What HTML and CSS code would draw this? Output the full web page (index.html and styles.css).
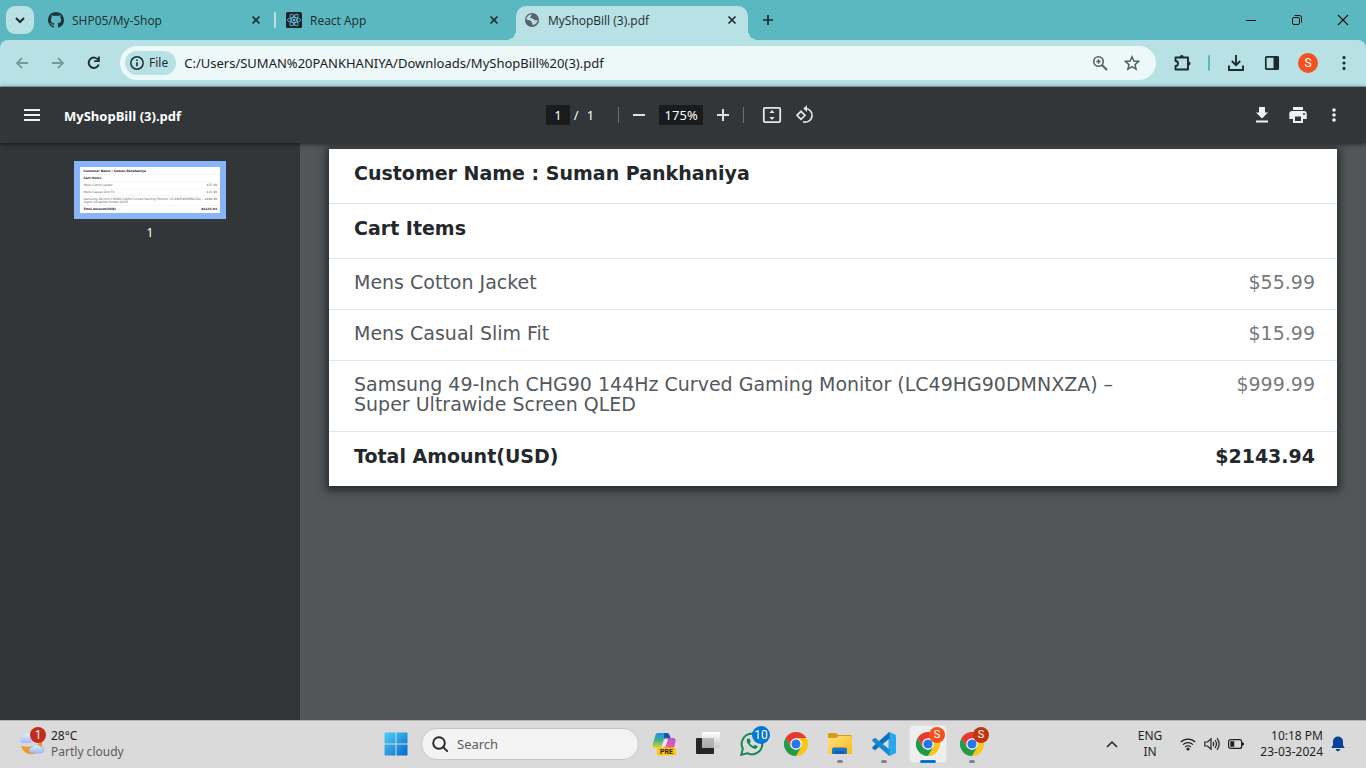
FILE: index.html
```html
<!DOCTYPE html>
<html lang="en">
<head>
<meta charset="utf-8">
<title>MyShopBill (3).pdf</title>
<link rel="stylesheet" href="styles.css">
</head>
<body>
<svg class="defs" aria-hidden="true">
  <defs>
    <linearGradient id="win" x1="0" y1="0" x2="1" y2="1"><stop offset="0" stop-color="#4fd0fb"/><stop offset="1" stop-color="#0467c8"/></linearGradient>
    <linearGradient id="folder" x1="0" y1="0" x2="1" y2="1"><stop offset="0" stop-color="#ffe083"/><stop offset="1" stop-color="#f9bb14"/></linearGradient>
    <linearGradient id="copA" x1="0" y1="0" x2="0" y2="1"><stop offset="0" stop-color="#1d8fe8"/><stop offset=".5" stop-color="#3db58c"/><stop offset="1" stop-color="#f3cf28"/></linearGradient>
    <linearGradient id="copB" x1="1" y1="0" x2="0" y2="1"><stop offset="0" stop-color="#a557ea"/><stop offset=".6" stop-color="#ee5c9c"/><stop offset="1" stop-color="#fb9050"/></linearGradient>
    <linearGradient id="cloud" x1="0" y1="0" x2="0" y2="1"><stop offset="0" stop-color="#e6f0ff"/><stop offset="1" stop-color="#9dbcf0"/></linearGradient>
    <linearGradient id="pane" x1="0" y1="0" x2="0" y2="1"><stop offset="0" stop-color="#fff"/><stop offset="1" stop-color="#c8c8c8"/></linearGradient>
    <symbol id="close" viewBox="0 0 16 16"><path d="M4.500 4.500l7 7M11.500 4.500l-7 7" fill="none" stroke="#1d2b2d" stroke-width="1.700"/></symbol>
    <symbol id="chrome" viewBox="0 0 24 24">
      <path d="M12 6H22.400A12 12 0 0 1 12 24L17.200 15z" fill="#fcc619"/>
      <path d="M1.600 6A12 12 0 0 1 22.400 6H12L6.800 15z" fill="#e53a2d"/>
      <path d="M1.600 6L6.800 15L12 18L17.200 15L12 24A12 12 0 0 1 1.600 6z" fill="#249a48"/>
      <circle cx="12" cy="12" r="5.800" fill="#fff"/><circle cx="12" cy="12" r="4.600" fill="#2477ea"/>
    </symbol>
  </defs>
</svg>

<header class="tabstrip">
  <button class="tab-search" aria-label="Search tabs"><svg width="16" height="16" viewBox="0 0 16 16"><path d="M4 6l4 4 4-4" fill="none" stroke="#1d2b2d" stroke-width="2"/></svg></button>
  <nav class="tabs">
    <div class="tab">
      <svg width="16" height="16" viewBox="0 0 16 16"><path fill="#24323a" d="M8 0C3.58 0 0 3.58 0 8c0 3.54 2.29 6.53 5.47 7.59.4.07.55-.17.55-.38 0-.19-.01-.82-.01-1.49-2.01.37-2.53-.49-2.69-.94-.09-.23-.48-.94-.82-1.13-.28-.15-.68-.52-.01-.53.63-.01 1.08.58 1.23.82.72 1.21 1.87.87 2.33.66.07-.52.28-.87.51-1.07-1.78-.2-3.64-.89-3.64-3.95 0-.87.31-1.59.82-2.15-.08-.2-.36-1.02.08-2.12 0 0 .67-.21 2.2.82.64-.18 1.32-.27 2-.27s1.36.09 2 .27c1.53-1.04 2.2-.82 2.2-.82.44 1.1.16 1.92.08 2.12.51.56.82 1.27.82 2.15 0 3.07-1.87 3.75-3.65 3.95.29.25.54.73.54 1.48 0 1.07-.01 1.93-.01 2.2 0 .21.15.46.55.38A8.01 8.01 0 0 0 16 8c0-4.42-3.58-8-8-8z"/></svg>
      <span class="tab-title">SHP05/My-Shop</span>
      <button class="tab-close" aria-label="Close SHP05/My-Shop"><svg width="16" height="16"><use href="#close"/></svg></button>
    </div>
    <span class="tab-sep"></span>
    <div class="tab">
      <svg width="16" height="16" viewBox="0 0 16 16"><rect width="16" height="16" rx="1.500" fill="#20232a"/><g fill="none" stroke="#61bfdc" stroke-width=".9"><ellipse cx="8" cy="8" rx="6.500" ry="2.500"/><ellipse cx="8" cy="8" rx="6.500" ry="2.500" transform="rotate(60 8 8)"/><ellipse cx="8" cy="8" rx="6.500" ry="2.500" transform="rotate(120 8 8)"/></g><circle cx="8" cy="8" r="1.300" fill="#61bfdc"/></svg>
      <span class="tab-title">React App</span>
      <button class="tab-close" aria-label="Close React App"><svg width="16" height="16"><use href="#close"/></svg></button>
    </div>
    <div class="tab tab-active">
      <svg width="16" height="16" viewBox="0 0 16 16"><circle cx="8" cy="8" r="7" fill="#5a6368"/><path d="M8 2.300c-.8.600-.4 1.500-1.400 2.100-.8.500-.5 1.500.6 1.700 1 .1 1 .9 2 1 1.200.200 1.200 1.500 2.400 1.300.9-.1 1.300-.7 2.100-.4-.3 2.800-2.400 4.800-5.100 5.200.2-1.100-.2-1.800-.9-2.200.2-1.600-.6-2.300-1.800-2.600C4.700 8.200 3.600 7.500 2.400 7.200 2.700 4.500 5 2.400 8 2.300z" fill="#b7e1e4"/></svg>
      <span class="tab-title">MyShopBill (3).pdf</span>
      <button class="tab-close" aria-label="Close MyShopBill (3).pdf"><svg width="16" height="16"><use href="#close"/></svg></button>
    </div>
  </nav>
  <button class="new-tab" aria-label="New tab"><svg width="16" height="16" viewBox="0 0 16 16"><path d="M8 3v10M3 8h10" stroke="#1d2b2d" stroke-width="1.700"/></svg></button>
  <div class="window-controls">
    <button aria-label="Minimize"><svg width="12" height="12" viewBox="0 0 12 12"><path d="M1 6.500h10" stroke="#111"/></svg></button>
    <button aria-label="Restore"><svg width="12" height="12" viewBox="0 0 12 12" fill="none" stroke="#111"><rect x="1.500" y="3.500" width="7" height="7" rx="1.500"/><path d="M3.500 1.500H8.500a2 2 0 0 1 2 2V8.500"/></svg></button>
    <button aria-label="Close window"><svg width="12" height="12" viewBox="0 0 12 12"><path d="M1 1l10 10M11 1L1 11" stroke="#111" stroke-width="1.100"/></svg></button>
  </div>
</header>

<div class="toolbar">
  <button class="tool" aria-label="Back"><svg width="16" height="16" viewBox="0 0 16 16"><path d="M14 8H3M8 3L3 8l5 5" fill="none" stroke="#7b9a9d" stroke-width="1.800"/></svg></button>
  <button class="tool" aria-label="Forward"><svg width="16" height="16" viewBox="0 0 16 16"><path d="M2 8h11M8 3l5 5-5 5" fill="none" stroke="#7b9a9d" stroke-width="1.800"/></svg></button>
  <button class="tool" aria-label="Reload"><svg width="16" height="16" viewBox="0 0 16 16"><path d="M12.800 9.500A5.200 5.200 0 1 1 12.300 5" fill="none" stroke="#1d2b2d" stroke-width="1.900"/><path d="M13.800 1.500V7H8.300V5.200h3.700V1.500z" fill="#1d2b2d"/></svg></button>
  <div class="omnibox">
    <button class="chip"><svg width="16" height="16" viewBox="0 0 16 16"><circle cx="8" cy="8" r="6.200" fill="none" stroke="#1d2b2d" stroke-width="1.500"/><path d="M8 7.200v4M8 4.500v1.600" stroke="#1d2b2d" stroke-width="1.600"/></svg>File</button>
    <input class="url" aria-label="Address" value="C:/Users/SUMAN%20PANKHANIYA/Downloads/MyShopBill%20(3).pdf">
    <button class="inner" aria-label="Zoom"><svg width="16" height="16" viewBox="0 0 16 16" fill="none" stroke="#526164"><circle cx="6.500" cy="6.500" r="4.700" stroke-width="1.600"/><path d="M10 10l5 5" stroke-width="2"/><path d="M6.500 4.300v4.400M4.300 6.500h4.400" stroke-width="1.500"/></svg></button>
    <button class="inner" aria-label="Bookmark this tab"><svg width="16" height="16" viewBox="0 0 16 16"><path d="M8 1.800l1.900 4.300 4.700.4-3.600 3.100 1.100 4.600L8 11.700l-4.100 2.500L5 9.600 1.400 6.500l4.700-.4z" fill="none" stroke="#526164" stroke-width="1.500"/></svg></button>
  </div>
  <button class="tool" aria-label="Extensions"><svg width="18" height="18" viewBox="0 0 18 18"><path d="M2.500 3.500H15V15.500H2.500V12a2.300 2.300 0 0 0 0-5z" fill="none" stroke="#1d2b2d" stroke-width="1.900" stroke-linejoin="round"/><path d="M6.700 3a2 2 0 0 1 4 0zM15.500 7.500a2 2 0 0 1 0 4z" fill="#1d2b2d"/></svg></button>
  <span class="tool-sep"></span>
  <button class="tool" aria-label="Downloads"><svg width="18" height="18" viewBox="0 0 18 18"><path d="M9 1v10M4.800 7L9 11.200 13.200 7M2 11.500V16h14v-4.500" fill="none" stroke="#1d2b2d" stroke-width="1.900"/></svg></button>
  <button class="tool" aria-label="Side panel"><svg width="16" height="16" viewBox="0 0 16 16"><rect x="1.800" y="1.800" width="12.400" height="12.400" rx="1" fill="none" stroke="#1d2b2d" stroke-width="1.700"/><path d="M9.500 1.500h5v13h-5z" fill="#1d2b2d"/></svg></button>
  <button class="tool" aria-label="Profile"><span class="avatar">S</span></button>
  <button class="tool" aria-label="Menu"><svg width="16" height="16" viewBox="0 0 16 16" fill="#1d2b2d"><circle cx="8" cy="2.600" r="1.600"/><circle cx="8" cy="8" r="1.600"/><circle cx="8" cy="13.400" r="1.600"/></svg></button>
</div>

<section class="pdfbar">
  <div class="pdf-left">
    <button aria-label="Menu"><svg width="16" height="16" viewBox="0 0 16 16"><path d="M0 3h16M0 8h16M0 13h16" stroke="#f1f1f1" stroke-width="2"/></svg></button>
    <h1 class="pdf-title">MyShopBill (3).pdf</h1>
  </div>
  <div class="pdf-center">
    <input class="box page-no" aria-label="Page number" value="1"><span class="slash">/</span><span class="page-count">1</span>
    <span class="pdf-sep"></span>
    <button aria-label="Zoom out"><svg width="14" height="14" viewBox="0 0 14 14"><path d="M1 7h12" stroke="#e0e0e0" stroke-width="2"/></svg></button>
    <input class="box zoom" aria-label="Zoom level" value="175%">
    <button aria-label="Zoom in"><svg width="14" height="14" viewBox="0 0 14 14"><path d="M1 7h12M7 1v12" stroke="#e0e0e0" stroke-width="2"/></svg></button>
    <span class="pdf-sep"></span>
    <button class="wide" aria-label="Fit to page"><svg width="20" height="20" viewBox="0 0 20 20"><rect x="1.800" y="2.800" width="16.400" height="14.400" rx="1.200" fill="none" stroke="#e8e8e8" stroke-width="1.800"/><path d="M10 5l2.600 3H7.400zM10 15l2.600-3H7.400z" fill="#e8e8e8"/></svg></button>
    <button class="last" aria-label="Rotate counterclockwise"><svg width="20" height="20" viewBox="0 0 20 20" fill="none" stroke="#e8e8e8" stroke-width="1.700"><path d="M6 6.300l4 4-4 4-4-4z"/><path d="M10 3.500A6.800 6.800 0 1 1 8 16.700"/><path d="M12 .3L8.300 3.600 12 7z" fill="#e8e8e8" stroke="none"/></svg></button>
  </div>
  <div class="pdf-right">
    <button aria-label="Download"><svg width="16" height="16" viewBox="0 0 16 16" fill="#f1f1f1"><path d="M5 0h6v5.500h3L8 11.500 2 5.500h3zM2 13.500h12v2H2z"/></svg></button>
    <button aria-label="Print"><svg width="18" height="18" viewBox="0 0 18 18" fill="#f1f1f1"><path d="M4 1h10v3H4zM3 5h12a2.700 2.700 0 0 1 2.700 2.700V13H14v4H4v-4H.3V7.700A2.700 2.700 0 0 1 3 5zm3 5.500V15h6v-4.500z"/><circle cx="15" cy="8" r="1" fill="#323639"/></svg></button>
    <button aria-label="More actions"><svg width="16" height="16" viewBox="0 0 16 16" fill="#f1f1f1"><circle cx="8" cy="3" r="1.800"/><circle cx="8" cy="8" r="1.800"/><circle cx="8" cy="13" r="1.800"/></svg></button>
  </div>
</section>

<main class="viewer">
  <aside class="sidebar">
    <button class="thumb" aria-label="Thumbnail for page 1">
      <svg class="thumb-page" viewBox="0 0 140 46" aria-hidden="true">
        <path d="M0 7.500h140M0 15h140M0 22h140M0 29h140M0 38.500h140" stroke="#e4e7ea" stroke-width=".4"/>
        <g class="mini"><text class="mini-b" x="3.500" y="4.500">Customer Name : Suman Pankhaniya</text><text class="mini-b" x="3.500" y="12">Cart Items</text><text x="3.500" y="19">Mens Cotton Jacket</text><text x="3.500" y="26">Mens Casual Slim Fit</text><text x="3.500" y="33">Samsung 49-Inch CHG90 144Hz Curved Gaming Monitor (LC49HG90DMNXZA) –</text><text x="3.500" y="36">Super Ultrawide Screen QLED</text><text class="mini-b" x="3.500" y="43">Total Amount(USD)</text></g>
        <g class="mini" text-anchor="end"><text x="137" y="19">$55.99</text><text x="137" y="26">$15.99</text><text x="137" y="33">$999.99</text><text class="mini-b" x="137" y="43">$2143.94</text></g>
      </svg>
    </button>
    <span class="thumb-no">1</span>
  </aside>
  <div class="canvas">
    <table class="bill">
      <tbody>
        <tr class="strong"><th colspan="2" scope="row">Customer Name : Suman Pankhaniya</th></tr>
        <tr class="strong"><th colspan="2" scope="row">Cart Items</th></tr>
        <tr><td>Mens Cotton Jacket</td><td class="price">$55.99</td></tr>
        <tr><td>Mens Casual Slim Fit</td><td class="price">$15.99</td></tr>
        <tr><td>Samsung 49-Inch CHG90 144Hz Curved Gaming Monitor (LC49HG90DMNXZA) –<br>Super Ultrawide Screen QLED</td><td class="price">$999.99</td></tr>
        <tr class="strong"><th scope="row">Total Amount(USD)</th><td class="price">$2143.94</td></tr>
      </tbody>
    </table>
  </div>
</main>

<footer class="taskbar">
  <button class="weather">
    <span class="weather-icon"><svg width="26" height="26" viewBox="0 0 26 26"><path d="M2 15c3 9 12 10 17 6 4-3 5-7 3.500-12C20 14 12 17 2 15z" fill="#f39a1d"/><path d="M3.500 12a3.300 3.300 0 0 1 0-6.500 5 5 0 0 1 9-1V12z" fill="url(#cloud)"/><path d="M13 22a3 3 0 0 1 0-6 4.500 4.500 0 0 1 8-.500 3.200 3.200 0 0 1 1 6.500z" fill="url(#cloud)" stroke="#85a9e4" stroke-width=".5"/></svg><span class="badge badge-red">1</span></span>
    <span class="weather-text"><span>28°C</span><span class="muted">Partly cloudy</span></span>
  </button>
  <nav class="apps">
    <button class="app" aria-label="Start"><svg width="24" height="24" viewBox="0 0 24 24"><path fill="url(#win)" d="M1 .5h10.500v11H.5V1zM12.500.500H23l.5.500v10.500h-11zM.5 12.500h11v11H1l-.5-.5zM12.500 12.500h11V23l-.5.500H12.500z"/></svg></button>
    <label class="search"><svg width="18" height="18" viewBox="0 0 18 18" fill="none" stroke="#262626" stroke-width="1.900"><circle cx="8" cy="8" r="5.800"/><path d="M12.200 12.200l4 4" stroke-linecap="round"/></svg><input type="text" placeholder="Search" aria-label="Search"></label>
    <button class="app" aria-label="Copilot"><svg width="24" height="24" viewBox="0 0 24 24"><path d="M6 1h8.500c2 0 2.500 1 3 2.500L18.500 6h-4c-2 0-2.700 1-3.300 3L9 16H3.500C.8 16 .3 14 1 11.500L3.300 3.500C3.800 1.800 4.500 1 6 1z" fill="url(#copA)"/><path d="M12 1h2.500c2 0 2.500 1 3 2.500L18.500 6h-4c-1 0-1.700.3-2.300 1z" fill="#1b50c0"/><path d="M15.500 6H21c2.500 0 3 2 2.400 4L21.500 17H9c2 0 2.500-1 3-2.600l2-6.400c.4-1.200.5-2 1.500-2z" fill="url(#copB)"/><path d="M13.500 7.500h2.500l-2.500 7H10z" fill="#e9eef6"/><rect x="5" y="15.500" width="19" height="8" rx="2" fill="#ffc60a"/><text class="pre" x="14.500" y="22">PRE</text></svg></button>
    <button class="app" aria-label="Task view"><svg width="24" height="24" viewBox="0 0 24 24"><rect x="0" y="6" width="18" height="16" rx="1" fill="#262626"/><rect x="6" y="0" width="18" height="16" rx="1" fill="url(#pane)"/><path d="M6 6h12v10H6z" fill="#949494" opacity=".55"/></svg></button>
    <button class="app" aria-label="WhatsApp"><svg width="24" height="24" viewBox="0 0 24 24"><path d="M1.300 22.700l1.500-6A10.300 10.300 0 1 1 7.300 21.200z" fill="#d5ded9" stroke="#178556" stroke-width="2"/><path d="M8 6.500c-2 1-1.500 3.500.5 6s5 4.500 7 4.200c1.700-.3 2.300-1.500 2-2.500l-2.700-1.400-1.300 1.500c-2-.8-3.200-2-3.900-3.500L10.800 9.500 9.500 6.500z" fill="#178556"/></svg><span class="badge badge-blue">10</span></button>
    <button class="app" aria-label="Chrome"><svg width="24" height="24"><use href="#chrome"/></svg></button>
    <button class="app running" aria-label="File Explorer"><svg width="24" height="24" viewBox="0 0 24 24"><path d="M0 2.500Q0 1 1.500 1H8l2 2h13l1 1v5H0z" fill="#d99b10"/><path d="M0 6h8l2.500-2H22.500Q24 4 24 5.500V22H0z" fill="url(#folder)"/><path d="M4 22v-4.500Q4 15.500 6 15.500H17q2 0 2 2V22z" fill="#1774c8"/><path d="M7 19h9v3H7z" fill="#1160ae"/></svg></button>
    <button class="app running" aria-label="Visual Studio Code"><svg width="24" height="24" viewBox="0 0 24 24"><path d="M17.500 0L24 3v18l-6.500 3-1-1V1z" fill="#29a8f0"/><path d="M17.500 0v6.500L3 18.300.3 16.500V15L17 .3z" fill="#0b72bd"/><path d="M17.500 24v-6.500L3 5.700.3 7.500V9L17 23.700z" fill="#1689d3"/></svg></button>
    <button class="app current" aria-label="Chrome, current window"><svg width="24" height="24"><use href="#chrome"/></svg><span class="badge badge-s">S</span></button>
    <button class="app running" aria-label="Chrome, second profile"><svg width="24" height="24"><use href="#chrome"/></svg><span class="badge badge-s dark">S</span></button>
  </nav>
  <div class="tray">
    <button aria-label="Show hidden icons"><svg width="12" height="12" viewBox="0 0 12 12"><path d="M1 9l5-5 5 5" fill="none" stroke="#222" stroke-width="1.500"/></svg></button>
    <button class="lang"><span>ENG</span><span>IN</span></button>
    <button class="status" aria-label="Network, sound and battery">
      <svg width="16" height="16" viewBox="0 0 16 16" fill="none" stroke="#222" stroke-width="1.200"><path d="M.7 6.200a10.300 10.300 0 0 1 14.600 0M3 8.700a7 7 0 0 1 10 0M5.200 11a4 4 0 0 1 5.600 0"/><circle cx="8" cy="13" r="1" fill="#222"/></svg>
      <svg width="16" height="16" viewBox="0 0 16 16" fill="none" stroke="#222" stroke-width="1.200"><path d="M.8 6h2.700L7 2.800v10.400L3.500 10H.8zM9 5.800q1.500 2.200 0 4.400M11 4q3 4 0 8M13 2.200q4.300 5.800 0 11.600"/></svg>
      <svg width="16" height="16" viewBox="0 0 16 16"><rect x=".6" y="3.600" width="13" height="8.800" rx="2" fill="none" stroke="#222" stroke-width="1.200"/><path d="M2.300 5.300h4v5.400h-4zM14 6.300l2 .7v2l-2 .7z" fill="#222"/></svg>
    </button>
    <button class="clock"><span>10:18 PM</span><span>23-03-2024</span></button>
    <button aria-label="Notifications"><svg width="14" height="16" viewBox="0 0 14 16" fill="#07419b"><path d="M7 .5a5 5 0 0 1 5 5V9l1.700 3H.3L2 9V5.500a5 5 0 0 1 5-5zM4.800 13h4.400a2.200 2.200 0 0 1-4.400 0z"/></svg></button>
  </div>
</footer>
</body>
</html>
```

FILE: styles.css
```css
* { box-sizing: border-box; }

body {
  margin: 0;
  height: 100vh;
  display: flex;
  flex-direction: column;
  overflow: hidden;
  font-family: "Noto Sans", "Open Sans", sans-serif;
  font-size: 12px;
  line-height: 16px;
  color: #1d2b2d;
  background: #5bb8c1;
}

button {
  display: flex;
  align-items: center;
  justify-content: center;
  padding: 0;
  border: 0;
  background: none;
  font: inherit;
  color: inherit;
}

input { font: inherit; color: inherit; border: 0; padding: 0; min-width: 0; }
svg { display: block; flex: none; }
.defs { position: absolute; width: 0; height: 0; }

/* Tab strip */
.tabstrip { display: flex; height: 40px; padding-left: 6px; flex: none; }
.tab-search { width: 28px; height: 28px; margin: 6px 6px 0 0; border-radius: 9px; background: #b7e1e4; }
.tabs { display: flex; min-width: 0; }
.tab { position: relative; display: flex; align-items: center; width: 232px; margin: 6px 6px 0 0; padding: 0 8px 6px; gap: 8px; }
.tab-title { flex: 1; white-space: nowrap; line-height: 18px; padding-top: 2px; font-family: "Open Sans", sans-serif; }
.tab-sep { width: 2px; height: 16px; margin: 12px 2px 0 -4px; background: #b7e1e4; border-radius: 1px; }
.tab-active { background: #b7e1e4; border-radius: 10px 10px 0 0; }
.tab-active::before, .tab-active::after { content: ""; position: absolute; bottom: 0; width: 10px; height: 10px; }
.tab-active::before { right: 100%; background: radial-gradient(circle at 0 0, #5bb8c1 10px, #b7e1e4 10px); }
.tab-active::after { left: 100%; background: radial-gradient(circle at 100% 0, #5bb8c1 10px, #b7e1e4 10px); }
.new-tab { width: 28px; height: 40px; }
.window-controls { display: flex; margin-left: auto; }
.window-controls button { width: 46px; height: 40px; }

/* Address bar */
.toolbar { display: flex; align-items: center; gap: 8px; height: 47px; padding: 0 8px; flex: none; background: #b7e1e4; border-bottom: 1px solid #8fb3b6; border-radius: 8px 8px 0 0; }
.tool { width: 28px; height: 28px; flex: none; }
.omnibox { flex: 1; display: flex; align-items: center; height: 34px; margin: 0 4px; padding: 0 8px 0 5px; border-radius: 17px; background: #edf8f9; }
.chip { height: 24px; padding: 0 8px 0 4px; gap: 4px; border-radius: 12px; background: #b7e1e4; }
.url { flex: 1; margin-left: 8px; background: none; font-size: 13px; color: #1c2224; }
.inner { width: 32px; height: 32px; }
.tool-sep { width: 2px; height: 16px; margin: 0 4px; background: #5bb8c1; border-radius: 1px; }
.avatar { width: 20px; height: 20px; border-radius: 50%; background: #f4511e; color: #fff; line-height: 20px; text-align: center; font-family: Roboto, sans-serif; }

/* PDF toolbar */
.pdfbar { position: relative; display: grid; grid-template-columns: 1fr auto 1fr; align-items: center; height: 56px; flex: none; padding: 0 20px; background: #323639; color: #fff; box-shadow: 0 1px 5px rgba(0, 0, 0, .6); font-size: 13px; }
.pdf-left, .pdf-center, .pdf-right { display: flex; align-items: center; }
.pdf-left button { width: 24px; height: 24px; }
.pdf-title { margin: 0 0 0 20px; padding-top: 2px; font-family: "Open Sans", sans-serif; font-size: 13px; font-weight: 700; line-height: 20px; }
.pdf-center button { width: 40px; height: 32px; }
.pdf-center .wide { width: 36px; margin-left: 10px; }
.pdf-center .last { width: 30px; }
.box { height: 20px; background: #191b1c; text-align: center; }
.page-no { width: 24px; }
.slash { margin-left: 4px; }
.page-count { margin: 0 24px 0 8px; }
.zoom { width: 44px; }
.pdf-sep { width: 1px; height: 16px; background: #6b6e70; }
.pdf-right { justify-content: flex-end; gap: 12px; }
.pdf-right button { width: 24px; height: 24px; }

/* Viewer */
.viewer { display: flex; flex: 1; min-height: 0; background: #525659; }
.sidebar { width: 300px; flex: none; padding-top: 18px; background: #323639; display: flex; flex-direction: column; align-items: center; color: #fff; }
.thumb { width: 152px; padding: 6px; background: #8ab4f8; }
.thumb-page { width: 100%; background: #fff; }
.mini { font-family: "DejaVu Sans", sans-serif; font-size: 3px; fill: #666; }
.mini-b { font-weight: bold; fill: #222; }
.thumb-no { margin-top: 6px; }
.canvas { flex: 1; padding: 6px 29px; }
.bill { width: 100%; border-collapse: collapse; background: #fff; box-shadow: 0 2px 8px 3px rgba(0, 0, 0, .5); font-family: "DejaVu Sans", sans-serif; font-size: 19px; line-height: 20px; color: #54585c; }
.bill th, .bill td { padding: 13px 0 17px 25px; border-bottom: 1px solid #e3e7ea; text-align: left; vertical-align: top; font-weight: normal; }
.bill .strong th, .bill .strong td { padding-top: 14px; padding-bottom: 20px; font-weight: bold; color: #24282c; }
.bill .price { padding-left: 0; padding-right: 22px; text-align: right; white-space: nowrap; color: #777a7d; }
.bill tr:last-child > * { border-bottom: 0; }

/* Taskbar */
.taskbar { display: grid; grid-template-columns: 1fr auto 1fr; height: 48px; flex: none; background: #dadada; box-shadow: inset 0 1px #b4b4b6; color: #1f1f1f; }
.weather { justify-content: flex-start; margin-left: 19px; gap: 6px; text-align: left; }
.weather-icon { position: relative; }
.weather-text, .lang, .clock { display: flex; flex-direction: column; }
.muted { color: #5c5c5c; }
.badge { position: absolute; height: 16px; min-width: 16px; border-radius: 9px; color: #fff; text-align: center; line-height: 16px; font-family: Roboto, sans-serif; }
.badge-red { left: 11px; top: -4px; background: #c42b1c; }
.badge-blue { right: 4px; top: 6px; width: 18px; height: 18px; line-height: 18px; background: #0078d4; }
.badge-s { right: 5px; top: 7px; background: #f4511e; font-size: 11px; }
.badge-s.dark { background: #bf360c; }
.apps { display: flex; align-items: center; padding-left: 2px; }
.app { position: relative; width: 44px; height: 48px; }
.running::after, .current::after { content: ""; position: absolute; bottom: 5px; width: 6px; height: 3px; border-radius: 2px; background: #858585; }
.current::after { width: 16px; background: #0078d4; }
.current::before { content: ""; position: absolute; inset: 5px 3px; border-radius: 4px; background: #eeeeee; border: 1px solid #e2e2e2; }
.current svg { position: relative; }
.search { display: flex; align-items: center; gap: 8px; width: 218px; height: 32px; margin: 0 3px; padding: 0 9px; border: 1px solid #c8c8c8; border-radius: 16px; background: #f3f3f3; }
.search input { flex: 1; background: none; font-size: 13px; }
.search input::placeholder { color: #5c5c5c; opacity: 1; }
.pre { font: bold 7px Roboto, sans-serif; text-anchor: middle; fill: #222; }
.tray { display: flex; align-items: center; justify-content: flex-end; padding-right: 21px; }
.lang { margin-left: 20px; }
.status { gap: 8px; margin-left: 18px; }
.clock { align-items: flex-end; margin: 0 8px 0 16px; }
```
